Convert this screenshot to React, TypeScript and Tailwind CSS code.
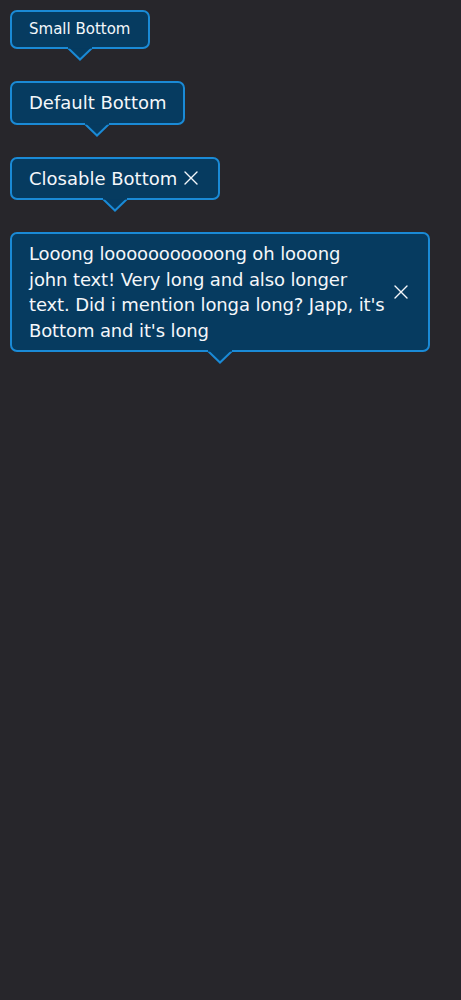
import type { ReactNode } from 'react';

type TipProps = {
  children: ReactNode;
  small?: boolean;
  closable?: boolean;
  wide?: boolean;
};

function CloseIcon() {
  return (
    <svg width="14" height="14" viewBox="0 0 14 14" className="shrink-0">
      <path d="M1 1 L13 13 M13 1 L1 13" stroke="#f4f7fa" strokeWidth="1.4" strokeLinecap="round" />
    </svg>
  );
}

function Tooltip({ children, small, closable, wide }: TipProps) {
  return (
    <div className={`relative ${wide ? 'w-[420px]' : ''}`}>
      <div
        className={`flex items-center rounded-[7px] border-2 border-[#1a8ad6] bg-[#063b60] text-[#f4f7fa] ${
          small ? 'py-[7px] pl-[17px] pr-[18px] text-[15px] leading-[21px]' : 'py-[7px] pl-[17px] text-[18px] leading-[25.5px]'
        } ${closable ? 'pr-5' : small ? '' : 'pr-4'} ${wide ? 'gap-0' : 'gap-[7px]'}`}
      >
        <span className={wide ? 'flex-1 whitespace-nowrap tracking-[-0.12px]' : ''}>{children}</span>
        {closable && <CloseIcon />}
      </div>
      <svg
        className="absolute left-1/2 top-full -mt-[2px] -translate-x-1/2"
        width="26"
        height="14"
        viewBox="0 0 26 14"
      >
        <path d="M0 1 L1 1 L13 12.5 L25 1 L26 1" fill="#063b60" stroke="#1a8ad6" strokeWidth="2" />
        <rect x="1" y="0" width="24" height="1.6" fill="#063b60" />
      </svg>
    </div>
  );
}

export default function App() {
  return (
    <div className="min-h-screen w-full bg-[#27262b] p-[10px] font-['DejaVu_Sans',sans-serif]">
      <div className="flex flex-col items-start gap-8">
        <Tooltip small>Small Bottom</Tooltip>
        <Tooltip>Default Bottom</Tooltip>
        <Tooltip closable>Closable Bottom</Tooltip>
        <Tooltip closable wide>
          Looong looooooooooong oh looong
          <br />
          john text! Very long and also longer
          <br />
          text. Did i mention longa long? Japp, it's
          <br />
          Bottom and it's long
        </Tooltip>
      </div>
    </div>
  );
}
